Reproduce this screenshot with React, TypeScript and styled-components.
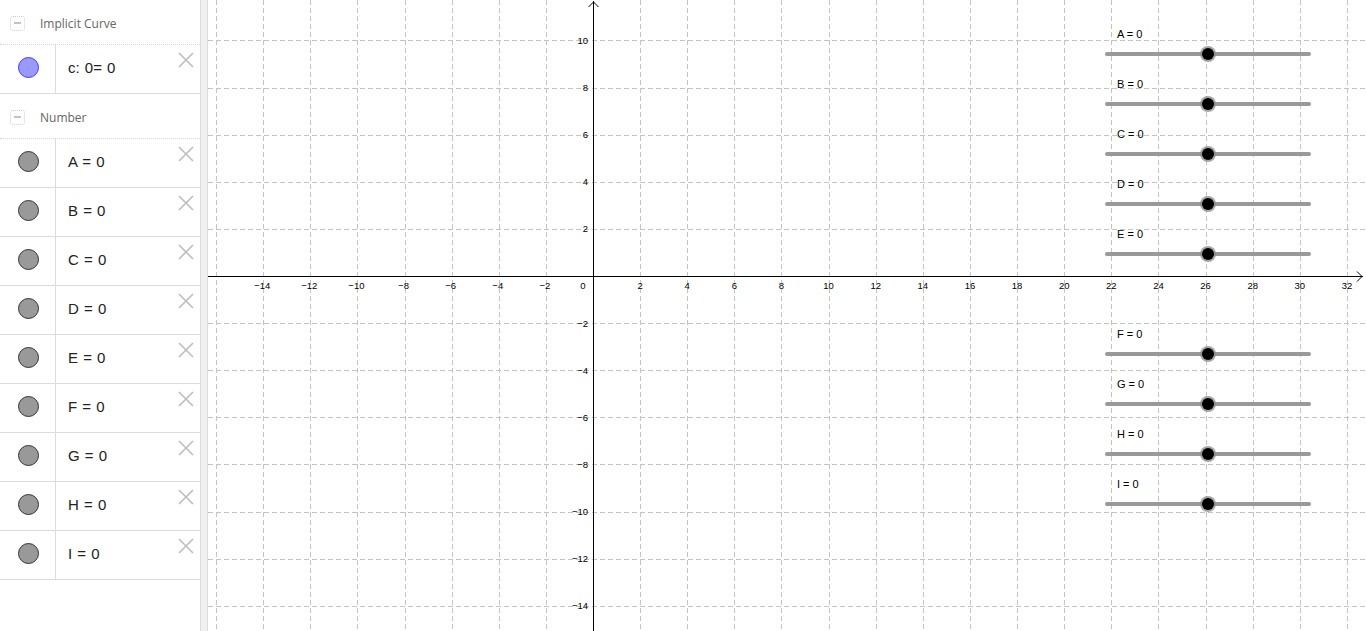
import React from "react";
import styled, { createGlobalStyle } from "styled-components";

const Global = createGlobalStyle`
  html, body { margin: 0; padding: 0; background: #fff; overflow: hidden; }
  #root { width: 1366px; height: 631px; }
`;

const Page = styled.div`
  display: flex;
  width: 1366px;
  height: 631px;
  overflow: hidden;
`;

const Panel = styled.div`
  width: 200px;
  flex: none;
  border-right: 1px solid #dcdcdc;
  display: flex;
  flex-direction: column;
  background: #fff;
`;

const Splitter = styled.div`
  width: 6px;
  flex: none;
  background: #f0f0f0;
  border-right: 1px solid #dcdcdc;
`;

const Canvas = styled.div`
  flex: 1;
  height: 631px;
  position: relative;
`;

const GroupHeader = styled.div`
  height: 42px;
  padding-top: 2px;
  display: flex;
  align-items: center;
  border-bottom: 1px dotted #d6d6d6;
  font-family: "Open Sans", sans-serif;
  font-size: 12px;
  color: #666;
`;

const Collapse = styled.span`
  width: 13px;
  height: 13px;
  margin: 0 15px 0 10px;
  border: 1px dotted #cfcfcf;
  border-radius: 3px;
  display: flex;
  align-items: center;
  justify-content: center;
  &::after {
    content: "";
    width: 7px;
    height: 2px;
    background: #c4c4c4;
  }
`;

const Item = styled.div`
  height: 48px;
  display: flex;
  border-bottom: 1px solid #dcdcdc;
`;

const MarkerCell = styled.div`
  width: 55px;
  flex: none;
  border-right: 1px solid #dcdcdc;
  display: flex;
  align-items: center;
  justify-content: center;
  padding-bottom: 4px;
`;

const Marker = styled.span<{ $fill: string; $stroke: string }>`
  width: 19px;
  height: 19px;
  border-radius: 50%;
  background: ${(p) => p.$fill};
  border: 1px solid ${(p) => p.$stroke};
  margin-left: 1px;
`;

const Formula = styled.div`
  flex: 1;
  display: flex;
  align-items: center;
  padding: 0 0 3px 12px;
  font-family: "Liberation Sans", Arial, sans-serif;
  font-size: 15px;
  word-spacing: 1px;
  color: #222;
  white-space: pre;
`;

const Close = styled.svg`
  flex: none;
  align-self: flex-start;
  margin: 7px 6px 0 0;
`;

const XIcon = () => (
  <Close width="16" height="16" viewBox="0 0 16 16">
    <path d="M1 1 L15 15 M15 1 L1 15" stroke="#bdbdbd" strokeWidth="1.6" fill="none" />
  </Close>
);

const numbers = ["A", "B", "C", "D", "E", "F", "G", "H", "I"];

const W = 1158;
const H = 631;
const OX = 385;
const OY = 276;
const S = 23.56;

const fmt = (n: number) => (n < 0 ? "\u2212" + Math.abs(n) : String(n));

const sliderYs = [54, 104, 154, 204, 254, 354, 404, 454, 504];

const Graph = () => {
  const xs: number[] = [];
  for (let u = -16; u <= 32; u += 2) xs.push(u);
  const ys: number[] = [];
  for (let u = -14; u <= 10; u += 2) ys.push(u);
  return (
    <svg width={W} height={H} viewBox={`0 0 ${W} ${H}`} style={{ display: "block" }}>
      <g stroke="#c4c4c4" strokeWidth="1" strokeDasharray="5,3" fill="none" shapeRendering="crispEdges">
        {xs.map((u) =>
          u === 0 ? null : (
            <line key={"gx" + u} x1={Math.round(OX + u * S) + 0.5} y1={0} x2={Math.round(OX + u * S) + 0.5} y2={H} />
          )
        )}
        {ys.map((u) =>
          u === 0 ? null : (
            <line key={"gy" + u} x1={0} y1={Math.round(OY - u * S) + 0.5} x2={W} y2={Math.round(OY - u * S) + 0.5} />
          )
        )}
      </g>
      <g stroke="#000" strokeWidth="1" fill="none">
        <line x1={0} y1={OY + 0.5} x2={W - 3} y2={OY + 0.5} shapeRendering="crispEdges" />
        <line x1={OX + 0.5} y1={1} x2={OX + 0.5} y2={H} shapeRendering="crispEdges" />
        <path d={`M${W - 9} ${OY - 4.5} L${W - 4} ${OY + 0.5} L${W - 9} ${OY + 5.5}`} />
        <path d={`M${OX - 4.5} 7 L${OX + 0.5} 2 L${OX + 5.5} 7`} />
      </g>
      <g fontFamily="'Liberation Sans', Arial, sans-serif" fontSize="9.5" fill="#000">
        {xs.map((u) =>
          u === 0 || u === -16 ? null : (
            <text key={"lx" + u} x={OX + u * S + (u < 0 ? -1 : 0)} y={OY + 13} textAnchor="middle">
              {fmt(u)}
            </text>
          )
        )}
        <text x={OX - 10} y={OY + 13} textAnchor="middle">0</text>
        {ys.map((u) =>
          u === 0 ? null : (
            <text key={"ly" + u} x={OX - 5} y={OY - u * S + 3.5} textAnchor="end">
              {fmt(u)}
            </text>
          )
        )}
      </g>
      {sliderYs.map((y, i) => (
        <g key={"s" + i}>
          <line x1={899} y1={y} x2={1101} y2={y} stroke="#999" strokeWidth="4" strokeLinecap="round" />
          <circle cx={1000} cy={y} r={8} fill="#8a8a8a" opacity="0.75" />
          <circle cx={1000} cy={y} r={6} fill="#000" />
          <text x={909} y={y - 16} fontFamily="'Liberation Sans', Arial, sans-serif" fontSize="11" fill="#000">
            {numbers[i]} = 0
          </text>
        </g>
      ))}
    </svg>
  );
};

export default function App() {
  return (
    <>
      <Global />
      <Page>
        <Panel>
          <GroupHeader>
            <Collapse />
            Implicit Curve
          </GroupHeader>
          <Item>
            <MarkerCell>
              <Marker $fill="#9999ff" $stroke="#3d3dff" />
            </MarkerCell>
            <Formula>c: 0= 0</Formula>
            <XIcon />
          </Item>
          <GroupHeader>
            <Collapse />
            Number
          </GroupHeader>
          {numbers.map((n) => (
            <Item key={n}>
              <MarkerCell>
                <Marker $fill="#999999" $stroke="#333333" />
              </MarkerCell>
              <Formula>{n} = 0</Formula>
              <XIcon />
            </Item>
          ))}
        </Panel>
        <Splitter />
        <Canvas>
          <Graph />
        </Canvas>
      </Page>
    </>
  );
}
